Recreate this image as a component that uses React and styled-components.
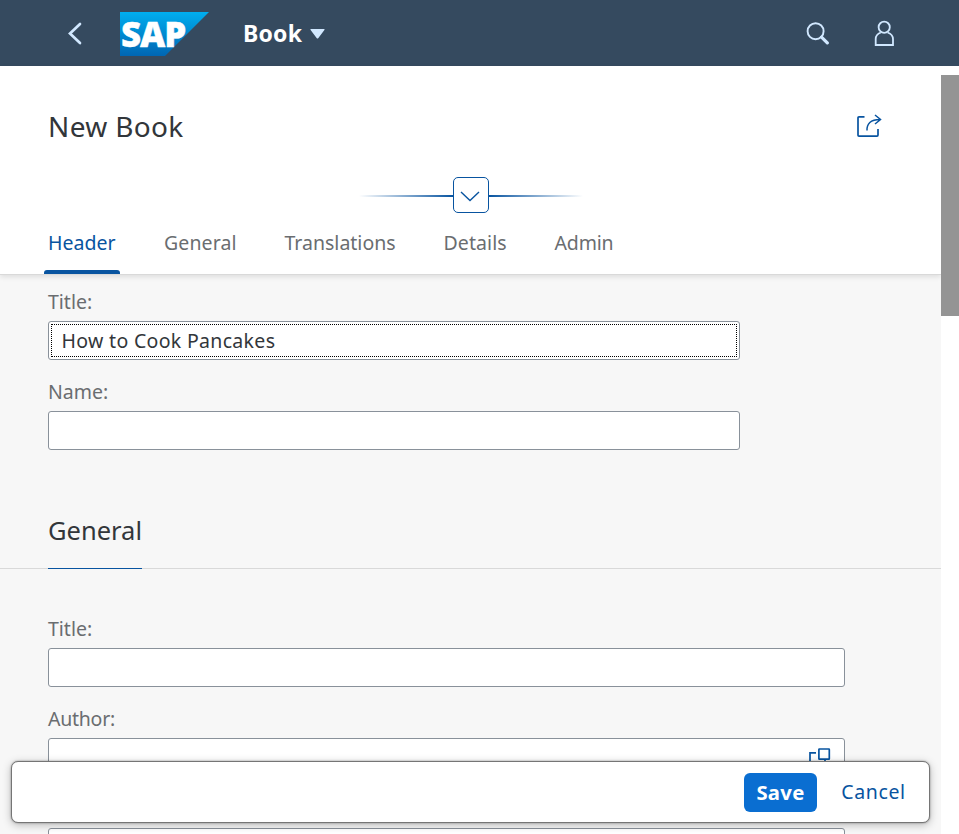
import React from "react";
import styled, { createGlobalStyle } from "styled-components";

const GlobalStyle = createGlobalStyle`
  * { box-sizing: border-box; }
  html, body { margin: 0; padding: 0; }
  body {
    font-family: "Noto Sans", "Open Sans", sans-serif;
    background: #fff;
    overflow: hidden;
  }
`;

const Screen = styled.div`
  position: relative;
  display: flex;
  flex-direction: column;
  width: 959px;
  height: 834px;
  overflow: hidden;
`;

const ShellBar = styled.header`
  display: flex;
  align-items: center;
  flex: none;
  height: 66px;
  padding: 0 64px 0 66px;
  background: #354a5f;
`;

const BackIcon = styled.svg`
  width: 16px;
  height: 24px;
  margin-right: 38px;
`;

const Logo = styled.svg`
  width: 89px;
  height: 44px;
  margin-top: 2px;
  margin-right: 34px;
  overflow: visible;
`;

const LogoText = styled.text`
  font-family: "Open Sans", "Noto Sans", sans-serif;
  font-size: 36px;
  font-weight: 800;
  letter-spacing: -1.2px;
`;

const AppName = styled.span`
  width: 58px;
  margin-top: -1px;
  color: #fff;
  font-size: 23px;
  font-weight: 700;
  line-height: 32px;
  letter-spacing: 0.2px;
  white-space: nowrap;
`;

const Caret = styled.svg`
  width: 15px;
  height: 10px;
  margin: 1px auto 0 9px;
`;

const ShellIcon = styled.svg`
  width: 24px;
  height: 28px;
  margin-left: 42px;
`;

const Body = styled.div`
  display: flex;
  height: 768px;
`;

const Page = styled.main`
  display: flex;
  flex-direction: column;
  width: 941px;
  background: #f7f7f7;
`;

const Track = styled.div`
  width: 18px;
  padding-top: 9px;
  background: #fff;
`;

const Thumb = styled.div`
  height: 241px;
  background: #949494;
`;

const PageHeader = styled.section`
  display: flex;
  flex-direction: column;
  flex: none;
  height: 209px;
  background: #fff;
  border-bottom: 1px solid #d9d9d9;
  box-shadow: 0 2px 5px rgba(0, 0, 0, 0.1);
`;

const TitleRow = styled.div`
  display: flex;
  align-items: center;
  justify-content: space-between;
  height: 111px;
  padding: 8px 59px 0 48px;
`;

const PageTitle = styled.h1`
  margin: 0;
  color: #32363a;
  font-size: 28px;
  font-weight: 400;
  line-height: 40px;
  letter-spacing: 0.35px;
`;

const ShareIcon = styled.svg`
  width: 26px;
  height: 24px;
`;

const Expander = styled.div`
  display: flex;
  align-items: center;
  justify-content: center;
  height: 36px;
`;

const Beam = styled.span`
  width: 94px;
  height: 2px;
  margin-top: 2px;
  background: linear-gradient(
    ${(p) => (p.$left ? "to right" : "to left")},
    rgba(8, 84, 160, 0),
    #0854a0
  );
`;

const ExpandButton = styled.button`
  display: flex;
  align-items: center;
  justify-content: center;
  width: 36px;
  height: 36px;
  padding: 3px 1px 0 0;
  border: 1px solid #0854a0;
  border-radius: 5px;
  background: #fff;
`;

const TabBar = styled.nav`
  display: flex;
  gap: 40px;
  height: 61px;
  padding-left: 44px;
`;

const Tab = styled.a`
  position: relative;
  width: ${(p) => p.$width}px;
  height: 61px;
  padding: 0 4px;
  color: ${(p) => (p.$active ? "#0854a0" : "#6a6d70")};
  font-size: 19.5px;
  line-height: 60px;
  letter-spacing: ${(p) => p.$tracking || 0}px;
  white-space: nowrap;

  &::after {
    content: "";
    position: absolute;
    right: 0;
    bottom: 0;
    left: 0;
    height: ${(p) => (p.$active ? 4 : 0)}px;
    border-radius: 3px 3px 0 0;
    background: #0854a0;
  }
`;

const Field = styled.div`
  width: ${(p) => p.$width}px;
  height: 90px;
  margin-left: 48px;
`;

const Label = styled.label`
  display: block;
  height: 37px;
  color: #6a6d70;
  font-size: 19.5px;
  line-height: 36px;
  letter-spacing: ${(p) => p.$tracking || 0}px;
`;

const InputFrame = styled.div`
  display: flex;
  width: 100%;
  height: 39px;
  padding: 2px;
  border: 1px solid #89919a;
  border-radius: 3px;
  background: #fff;
`;

const InputValue = styled.div`
  display: flex;
  align-items: center;
  flex: 1;
  padding-left: 9.5px;
  border: 1px dotted ${(p) => (p.$focused ? "#000" : "transparent")};
  color: #32363a;
  font-size: 19.5px;
  letter-spacing: 0.32px;
`;

const ValueHelpIcon = styled.svg`
  flex: none;
  width: 24px;
  height: 24px;
  margin: 6px 10px 0 0;
`;

const HeaderFields = styled.section`
  flex: none;
  height: 224px;
  padding-top: 9px;
`;

const SectionHeading = styled.div`
  flex: none;
  height: 70px;
  padding-left: 48px;
  border-bottom: 1px solid #d9d9d9;
`;

const SectionTitle = styled.h2`
  width: 94px;
  height: 70px;
  margin: 0;
  border-bottom: 1px solid #0854a0;
  color: #32363a;
  font-size: 25.5px;
  font-weight: 400;
  line-height: 62px;
  white-space: nowrap;
`;

const SectionFields = styled.section`
  flex: none;
  padding-top: 42px;
`;

const FooterBar = styled.footer`
  position: absolute;
  right: 29px;
  bottom: 11px;
  left: 11px;
  display: flex;
  align-items: center;
  justify-content: flex-end;
  height: 62px;
  padding-right: 23px;
  border: 1px solid #757575;
  border-radius: 7px;
  background: #fff;
  box-shadow: 0 0 2px rgba(0, 0, 0, 0.4), 0 2px 9px rgba(0, 0, 0, 0.25);
`;

const SaveButton = styled.button`
  width: 73px;
  height: 39px;
  margin-right: 24px;
  padding: 0;
  border: 0;
  border-radius: 6px;
  background: #0a6ed1;
  color: #fff;
  font: 700 20.3px/37px "Noto Sans", sans-serif;
  letter-spacing: 0.3px;
`;

const CancelButton = styled.button`
  width: 65px;
  height: 39px;
  padding: 0;
  border: 0;
  background: transparent;
  color: #0854a0;
  font: 400 19.5px/38px "Noto Sans", sans-serif;
  letter-spacing: 0.6px;
  white-space: nowrap;
`;

const tabs = [
  { name: "Header", width: 76, active: true },
  { name: "General", width: 80.5, tracking: 0.12 },
  { name: "Translations", width: 119 },
  { name: "Details", width: 71, tracking: 0.1 },
  { name: "Admin", width: 67, tracking: -0.15 },
];

function SapLogo() {
  return (
    <Logo viewBox="0 0 89 44" role="img" aria-label="SAP">
      <defs>
        <linearGradient id="sapBlue" x1="0" y1="0" x2="0" y2="1">
          <stop offset="0" stopColor="#00aeef" />
          <stop offset="1" stopColor="#0066b3" />
        </linearGradient>
      </defs>
      <path d="M0 0H89L45 44H0Z" fill="url(#sapBlue)" />
      <LogoText x="1" y="35" fill="#fff" stroke="#fff" strokeWidth="0.4" textLength="64" lengthAdjust="spacingAndGlyphs">
        SAP
      </LogoText>
    </Logo>
  );
}

export default function App() {
  return (
    <>
      <GlobalStyle />
      <Screen>
        <ShellBar>
          <BackIcon viewBox="0 0 16 24" fill="none" stroke="#d1e8ff" strokeWidth="2.7">
            <path d="M14 3L4 12.5L14 22" strokeLinecap="round" />
          </BackIcon>
          <SapLogo />
          <AppName>Book</AppName>
          <Caret viewBox="0 0 15 10">
            <path d="M0.8 0H14.2Q15 0.3 14.4 1L8.2 9.2Q7.5 10 6.8 9.2L0.6 1Q0 0.3 0.8 0Z" fill="#d1e8ff" />
          </Caret>
          <ShellIcon viewBox="0 0 24 28" fill="none" stroke="#d1e8ff">
            <circle cx="10.6" cy="12.2" r="8" strokeWidth="1.9" />
            <path d="M16.5 18.2L22.3 23.9" strokeWidth="3.2" strokeLinecap="round" />
          </ShellIcon>
          <ShellIcon viewBox="0 0 24 28" fill="none" stroke="#d1e8ff" strokeWidth="1.8">
            <circle cx="13.2" cy="8.2" r="5.6" />
            <path d="M9.8 13.5C6.5 14.8 4.7 17 4.7 20V26H22V20C22 17 20 14.8 16.6 13.5" />
          </ShellIcon>
        </ShellBar>
        <Body>
          <Page>
            <PageHeader>
              <TitleRow>
                <PageTitle>New Book</PageTitle>
                <ShareIcon viewBox="0 0 26 24" fill="none" stroke="#0854a0" strokeWidth="1.7">
                  <path d="M8.5 2.9H3Q2 2.9 2 3.9V21.2Q2 22.1 3 22.1H21Q22 22.1 22 21.1V15" />
                  <path d="M11 16.5C10.7 10 14.5 5.5 24 5.5M19 1L24.5 5.5L19 10" strokeWidth="1.5" />
                </ShareIcon>
              </TitleRow>
              <Expander>
                <Beam $left />
                <ExpandButton aria-label="Expand header">
                  <svg width="20" height="11" viewBox="0 0 20 11" fill="none" stroke="#0854a0" strokeWidth="1.4">
                    <path d="M1 1L10 9.5L19 1" />
                  </svg>
                </ExpandButton>
                <Beam />
              </Expander>
              <TabBar>
                {tabs.map((tab) => (
                  <Tab key={tab.name} $width={tab.width} $active={tab.active} $tracking={tab.tracking}>
                    {tab.name}
                  </Tab>
                ))}
              </TabBar>
            </PageHeader>
            <HeaderFields>
              <Field $width={692}>
                <Label>Title:</Label>
                <InputFrame>
                  <InputValue $focused>How to Cook Pancakes</InputValue>
                </InputFrame>
              </Field>
              <Field $width={692}>
                <Label>Name:</Label>
                <InputFrame />
              </Field>
            </HeaderFields>
            <SectionHeading>
              <SectionTitle>General</SectionTitle>
            </SectionHeading>
            <SectionFields>
              <Field $width={797}>
                <Label>Title:</Label>
                <InputFrame />
              </Field>
              <Field $width={797}>
                <Label $tracking={-0.25}>Author:</Label>
                <InputFrame>
                  <InputValue />
                  <ValueHelpIcon viewBox="0 0 24 24" fill="none" stroke="#0854a0" strokeWidth="1.7">
                    <rect x="10.9" y="2" width="10.4" height="10.2" rx="0.4" />
                    <path d="M8 5.9H2V19H17V12.5" />
                  </ValueHelpIcon>
                </InputFrame>
              </Field>
              <Field $width={797}>
                <Label />
                <InputFrame />
              </Field>
            </SectionFields>
          </Page>
          <Track>
            <Thumb />
          </Track>
        </Body>
        <FooterBar>
          <SaveButton>Save</SaveButton>
          <CancelButton>Cancel</CancelButton>
        </FooterBar>
      </Screen>
    </>
  );
}
